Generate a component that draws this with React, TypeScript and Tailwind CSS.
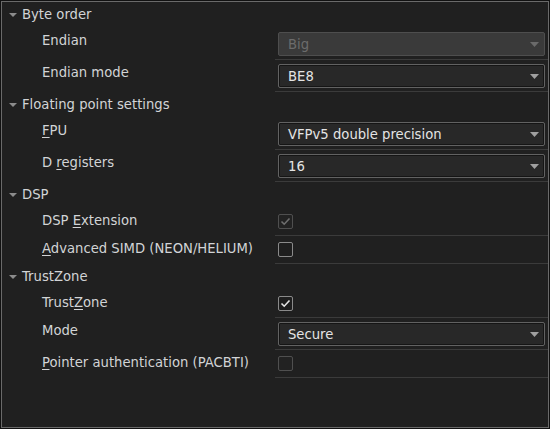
import type { ReactNode } from 'react'

const font = { fontFamily: '"DejaVu Sans", Verdana, sans-serif' }

function Header({ title }: { title: string }) {
  return (
    <div className="flex h-[26px] items-start pt-[5px]">
      <div className="flex h-4 items-center">
        <svg className="ml-[7px]" width="8" height="4" viewBox="0 0 8 4">
          <path d="M0 0H8L4 4Z" fill="#8c8c8c" />
        </svg>
        <span className="ml-[5px]">{title}</span>
      </div>
    </div>
  )
}

function Label({ children }: { children: ReactNode }) {
  return <div className="w-[273px] shrink-0 pl-[40px] pt-[5px]">{children}</div>
}

function Key({ children }: { children: ReactNode }) {
  return <span className="underline decoration-1 underline-offset-[2px]">{children}</span>
}

function Arrow({ color }: { color: string }) {
  return (
    <svg width="9" height="5" viewBox="0 0 9 5">
      <path d="M0 0H9L4.5 5Z" fill={color} />
    </svg>
  )
}

function SelectRow({ label, value, disabled }: { label: ReactNode; value: string; disabled?: boolean }) {
  return (
    <div className="flex">
      <Label>{label}</Label>
      <div className="flex-1 border-b border-[#3b3b3b] px-[3px] pb-[3px] pt-[4px]">
        {disabled ? (
          <div className="flex h-[24px] items-center justify-between rounded-[2px] border border-[#4e4e4e] bg-[#3a3a3a] pl-[9px] pr-[5px] text-[#6c6c6c]">
            <span className="pt-px">{value}</span>
            <Arrow color="#6a6a6a" />
          </div>
        ) : (
          <div className="flex h-[24px] items-center justify-between rounded-[2px] border border-[#626262] bg-[#282828] pl-[9px] pr-[5px] text-[#e4e4e4] shadow-[inset_0_0_0_1px_#151515]">
            <span className="pt-px">{value}</span>
            <Arrow color="#a0a0a0" />
          </div>
        )}
      </div>
    </div>
  )
}

function CheckRow({ label, checked, disabled }: { label: ReactNode; checked?: boolean; disabled?: boolean }) {
  return (
    <div className="flex h-[28px]">
      <Label>{label}</Label>
      <div className="flex-1 border-b border-[#3b3b3b] pl-[3px] pt-[6px]">
        <div
          className={
            disabled
              ? 'flex h-[15px] w-[15px] items-center justify-center rounded-[2px] border border-[#4f4f4f] bg-[#222222]'
              : 'flex h-[15px] w-[15px] items-center justify-center rounded-[2px] border border-[#8a8a8a] bg-[#1e1e1e]'
          }
        >
          {checked && (
            <svg width="11" height="11" viewBox="0 0 11 11">
              <path
                d="M1.5 5.5L4.2 8.2L9.5 2.5"
                fill="none"
                stroke={disabled ? '#6f6f6f' : '#e6e6e6'}
                strokeWidth="1.6"
              />
            </svg>
          )}
        </div>
      </div>
    </div>
  )
}

export default function App() {
  return (
    <div className="h-[429px] w-[550px] bg-[#111111] p-px" style={font}>
      <div className="h-full border border-[#6a6a6a] bg-[#202020] text-[13.2px] leading-4 text-[#d2d4d6]">
        <Header title="Byte order" />
        <SelectRow label="Endian" value="Big" disabled />
        <SelectRow label="Endian mode" value="BE8" />

        <Header title="Floating point settings" />
        <SelectRow label={<><Key>F</Key>PU</>} value="VFPv5 double precision" />
        <SelectRow label={<>D <Key>r</Key>egisters</>} value="16" />

        <Header title="DSP" />
        <CheckRow label={<>DSP <Key>E</Key>xtension</>} checked disabled />
        <CheckRow label={<><Key>A</Key>dvanced SIMD (NEON/HELIUM)</>} />

        <Header title="TrustZone" />
        <CheckRow label={<>Trust<Key>Z</Key>one</>} checked />
        <SelectRow label="Mode" value="Secure" />
        <CheckRow label={<><Key>P</Key>ointer authentication (PACBTI)</>} disabled />
      </div>
    </div>
  )
}
